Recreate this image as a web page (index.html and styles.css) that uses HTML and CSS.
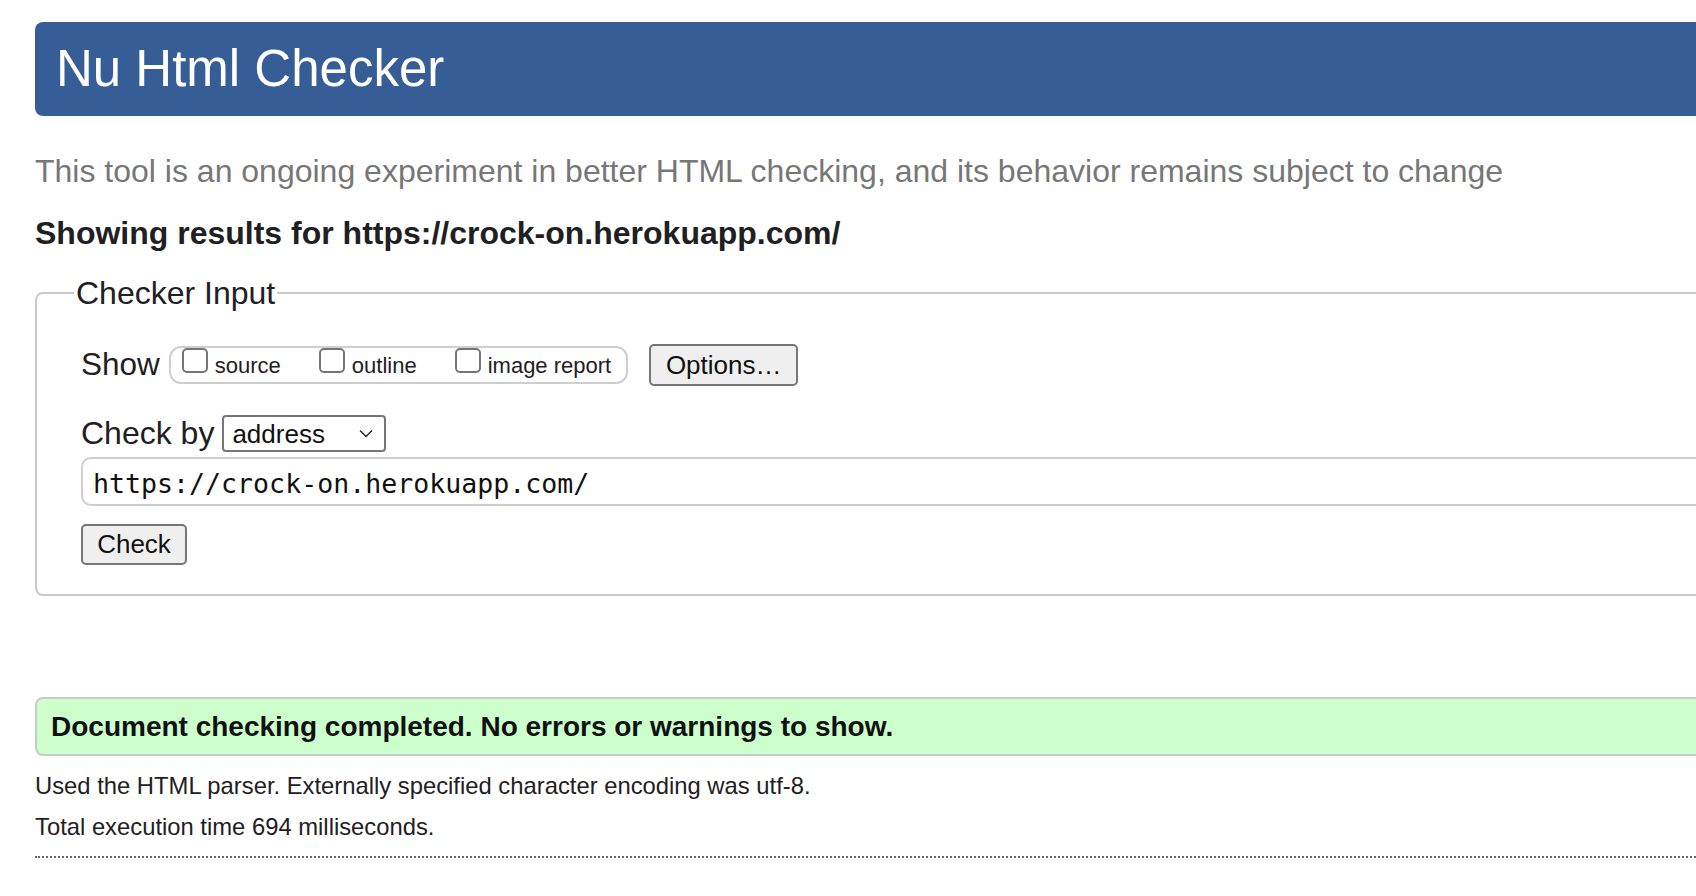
FILE: index.html
```html
<!DOCTYPE html>
<html lang="en">
<head>
<meta charset="utf-8">
<title>Nu Html Checker</title>
<link rel="stylesheet" href="styles.css">
</head>
<body>
<div class="page">
  <h1 class="masthead">Nu Html Checker</h1>
  <p class="intro">This tool is an ongoing experiment in better HTML checking, and its behavior remains subject to change</p>
  <h2 class="results-for">Showing results for https://crock-on.herokuapp.com/</h2>
  <fieldset class="checker">
    <legend class="checker-legend">Checker Input</legend>
    <div class="row row-show">
      <span class="row-label">Show</span>
      <div class="show-group">
        <label class="opt"><input type="checkbox" class="cb"><span class="opt-text">source</span></label>
        <label class="opt"><input type="checkbox" class="cb"><span class="opt-text">outline</span></label>
        <label class="opt"><input type="checkbox" class="cb"><span class="opt-text">image report</span></label>
      </div>
      <button class="btn btn-options" type="button">Options…</button>
    </div>
    <div class="row row-by">
      <span class="row-label">Check by</span>
      <div class="select">
        <span class="select-value">address</span>
        <svg class="chev" width="14" height="9" viewBox="0 0 14 9"><path d="M1 1.5 L7 7.5 L13 1.5" fill="none" stroke="#222" stroke-width="1.4"/></svg>
      </div>
    </div>
    <div class="url-field">https://crock-on.herokuapp.com/</div>
    <div class="row row-check">
      <button class="btn btn-check" type="submit">Check</button>
    </div>
  </fieldset>
  <div class="success">Document checking completed. No errors or warnings to show.</div>
  <p class="details details-parser">Used the HTML parser. Externally specified character encoding was utf-8.</p>
  <p class="details details-time">Total execution time 694 milliseconds.</p>
  <hr class="dotted">
</div>
</body>
</html>
```

FILE: styles.css
```css
html, body {
  margin: 0;
  padding: 0;
  overflow: hidden;
  background: #ffffff;
}

body {
  font-family: "Liberation Sans", Arial, Helvetica, sans-serif;
  color: #1f2023;
}

.page {
  width: 1800px;
  padding: 22px 0 0 35px;
}

.masthead {
  margin: 0;
  height: 92px;
  padding: 2px 0 0 21px;
  font-size: 51px;
  line-height: 90px;
  font-weight: normal;
  color: #ffffff;
  background: #365d95;
  border-radius: 8px 0 0 8px;
}

.intro {
  margin: 37px 0 0 0;
  font-size: 32px;
  line-height: 36px;
  color: #777777;
}

.results-for {
  margin: 25px 0 0 0;
  font-size: 32px;
  line-height: 38px;
  font-weight: bold;
}

.checker {
  margin: 23px 0 0 0;
  padding: 33px 0 29px 44px;
  border: 2px solid #cacaca;
  border-radius: 8px 0 0 8px;
  min-width: 0;
}

.checker-legend {
  margin-left: -7px;
  padding: 0 2px;
  font-size: 32px;
  line-height: 36px;
}

.row {
  display: flex;
  align-items: center;
}

.row-label {
  font-size: 32px;
  line-height: 36px;
}

.row-show {
  height: 42px;
}

.row-show .row-label {
  margin-right: 9px;
  margin-top: -1.6px;
  font-size: 31.5px;
}

.show-group {
  display: flex;
  align-items: flex-start;
  height: 34px;
  padding-left: 11px;
  padding-right: 15px;
  border: 2px solid #cfcfcf;
  border-radius: 12px;
}

.opt {
  display: flex;
  align-items: flex-start;
  margin-right: 38px;
}

.opt:last-child {
  margin-right: 0;
}

.cb {
  appearance: none;
  -webkit-appearance: none;
  width: 26px;
  height: 25px;
  margin: 0 7px 0 0;
  border: 2px solid #767676;
  border-radius: 5px;
  background: #ffffff;
  box-sizing: border-box;
}

.opt-text {
  font-size: 22px;
  line-height: 26px;
  margin-top: 5px;
}

.btn {
  font-family: "Liberation Sans", Arial, Helvetica, sans-serif;
  font-size: 26px;
  color: #111;
  background: #efefef;
  border: 2px solid #767676;
  border-radius: 5px;
  padding: 0;
  box-sizing: border-box;
}

.btn-options {
  width: 149px;
  height: 42px;
  margin-left: 21px;
}

.row-by {
  margin-top: 29px;
  height: 37px;
}

.row-by .row-label {
  margin-right: 8px;
  margin-top: -2px;
}

.select {
  display: flex;
  align-items: center;
  justify-content: space-between;
  width: 164px;
  height: 37px;
  box-sizing: border-box;
  padding: 0 11px 0 8px;
  border: 2px solid #767676;
  border-radius: 4px;
  background: #ffffff;
}

.select-value {
  font-size: 26px;
  line-height: 30px;
  color: #111;
}

.url-field {
  margin-top: 5px;
  height: 49px;
  box-sizing: border-box;
  padding: 0 0 0 10px;
  border: 2px solid #cfcfcf;
  border-radius: 10px 0 0 10px;
  font-family: "DejaVu Sans Mono", "Liberation Mono", monospace;
  font-size: 26.6px;
  line-height: 49px;
  color: #111;
}

.row-check {
  margin-top: 18px;
}

.btn-check {
  width: 106px;
  height: 41px;
}

.success {
  margin-top: 101px;
  height: 59px;
  box-sizing: border-box;
  padding: 0 0 0 14px;
  border: 2px solid #cacaca;
  border-radius: 8px 0 0 8px;
  background: #ccffcc;
  font-size: 28px;
  font-weight: bold;
  line-height: 56px;
  color: #111;
}

.details {
  margin: 0;
  font-size: 23.8px;
  line-height: 28px;
}

.details-parser {
  margin-top: 16px;
}

.details-time {
  margin-top: 13px;
}

.dotted {
  margin: 15px 0 0 0;
  height: 0;
  border: 0;
  border-top: 2px dotted #666666;
}
```
